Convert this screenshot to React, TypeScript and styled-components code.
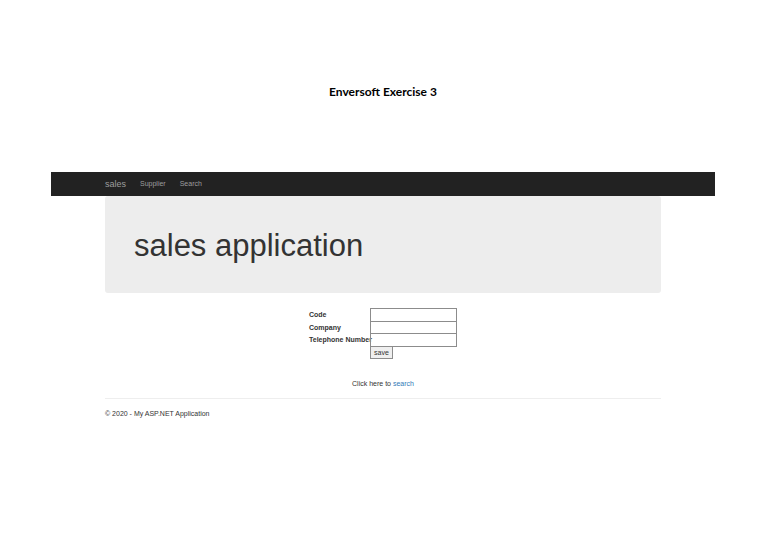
import React from "react";
import styled, { createGlobalStyle } from "styled-components";

const GlobalStyle = createGlobalStyle`
  *, *::before, *::after { box-sizing: border-box; }
  body {
    margin: 0;
    background: #fff;
    color: #333;
    font: 7px/10px "Liberation Sans", Arial, sans-serif;
  }
`;

const Page = styled.div`
  padding: 82px 57px 0 51px;
`;

const DocumentTitle = styled.h1`
  margin: 0 0 70px;
  color: #000;
  font: 700 12px/20px Lato, "Open Sans", sans-serif;
  text-align: center;
`;

const Navbar = styled.nav`
  display: flex;
  align-items: center;
  gap: 14px;
  height: 24px;
  padding: 0 54px;
  background: #222;
`;

const NavLink = styled.a<{ $brand?: boolean }>`
  color: #9d9d9d;
  font-size: ${({ $brand }) => ($brand ? 9 : 7)}px;
  text-decoration: none;
`;

const Container = styled.main`
  padding: 0 54px;
`;

const Jumbotron = styled.header`
  padding: 33px 29px 30px;
  border-radius: 3px;
  background: #ededed;
`;

const Heading = styled.h2`
  margin: 0;
  font-size: 31px;
  font-weight: 400;
  line-height: 34px;
`;

const Form = styled.form`
  display: grid;
  grid-template-columns: 61px 87px;
  grid-template-rows: 13px 12px 13px 12px;
  justify-content: center;
  align-items: start;
  margin-top: 15px;
`;

const Label = styled.label`
  font-weight: 700;
  line-height: 14px;
  white-space: nowrap;
`;

/* One pixel taller than its row, so that neighbouring borders share a line. */
const Input = styled.input`
  width: 100%;
  height: calc(100% + 1px);
  padding: 1px;
  border: 1px solid #8c8c8c;
  border-radius: 0;
  background: transparent;
  font: inherit;
`;

const SaveButton = styled.button`
  grid-column: 2;
  justify-self: start;
  height: 13px;
  padding: 0 3px;
  border: 1px solid #8c8c8c;
  border-radius: 0;
  background: #efefef;
  color: #333;
  font: inherit;
`;

const SearchPrompt = styled.p`
  margin: 21px 0 9px;
  text-align: center;
`;

const Link = styled.a`
  color: #337ab7;
  text-decoration: none;
`;

const Footer = styled.footer`
  padding: 10px 0;
  border-top: 1px solid #eee;
`;

const fields = [
  { id: "code", label: "Code" },
  { id: "company", label: "Company" },
  { id: "telephone", label: "Telephone Number" },
];

export default function App() {
  return (
    <>
      <GlobalStyle />
      <Page>
        <DocumentTitle>Enversoft Exercise 3</DocumentTitle>
        <Navbar>
          <NavLink $brand href="#home">sales</NavLink>
          <NavLink href="#supplier">Supplier</NavLink>
          <NavLink href="#search">Search</NavLink>
        </Navbar>
        <Container>
          <Jumbotron>
            <Heading>sales application</Heading>
          </Jumbotron>
          <Form onSubmit={(event) => event.preventDefault()}>
            {fields.map(({ id, label }) => (
              <React.Fragment key={id}>
                <Label htmlFor={id}>{label}</Label>
                <Input id={id} name={id} type={id === "telephone" ? "tel" : "text"} />
              </React.Fragment>
            ))}
            <SaveButton type="submit">save</SaveButton>
          </Form>
          <SearchPrompt>
            Click here to <Link href="#search">search</Link>
          </SearchPrompt>
          <Footer>© 2020 - My ASP.NET Application</Footer>
        </Container>
      </Page>
    </>
  );
}
